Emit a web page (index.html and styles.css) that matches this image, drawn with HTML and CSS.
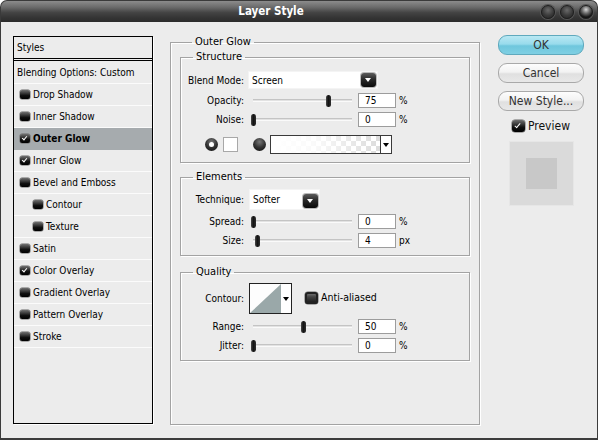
FILE: index.html
```html
<!DOCTYPE html>
<html>
<head>
<meta charset="utf-8">
<title>Layer Style</title>
<link rel="stylesheet" href="styles.css">
</head>
<body>
<div class="window">
  <div class="titlebar">
    <div class="title">Layer Style</div>
    <div class="winbtns"><span class="wb"></span><span class="wb"></span><span class="wb wb-active"></span></div>
  </div>
  <div class="body">
    <div class="styles-list">
      <div class="list-head">Styles</div>
      <div class="list-row blend">Blending Options: Custom</div>
      <div class="list-row"><span class="ico"></span>Drop Shadow</div>
      <div class="list-row"><span class="ico"></span>Inner Shadow</div>
      <div class="list-row selected"><span class="ico on"></span>Outer Glow</div>
      <div class="list-row"><span class="ico on"></span>Inner Glow</div>
      <div class="list-row"><span class="ico"></span>Bevel and Emboss</div>
      <div class="list-row sub"><span class="ico"></span>Contour</div>
      <div class="list-row sub"><span class="ico"></span>Texture</div>
      <div class="list-row"><span class="ico"></span>Satin</div>
      <div class="list-row"><span class="ico on"></span>Color Overlay</div>
      <div class="list-row"><span class="ico"></span>Gradient Overlay</div>
      <div class="list-row"><span class="ico"></span>Pattern Overlay</div>
      <div class="list-row"><span class="ico"></span>Stroke</div>
    </div>

    <fieldset class="group outer">
      <legend>Outer Glow</legend>

      <fieldset class="group sub-group structure">
        <legend>Structure</legend>
        <div class="frow r-blend">
          <span class="lbl">Blend Mode:</span>
          <div class="select sel-blend"><span class="sel-text">Screen</span><span class="dd"></span></div>
        </div>
        <div class="frow r-slide">
          <span class="lbl">Opacity:</span>
          <div class="slider"><div class="track"><span class="thumb" style="left:76%"></span></div></div>
          <div class="num">75</div><span class="unit">%</span>
        </div>
        <div class="frow r-slide">
          <span class="lbl">Noise:</span>
          <div class="slider"><div class="track"><span class="thumb" style="left:0%"></span></div></div>
          <div class="num">0</div><span class="unit">%</span>
        </div>
        <div class="frow r-color">
          <span class="radio on"></span>
          <span class="swatch"></span>
          <span class="radio"></span>
          <div class="gradbox"><span class="grad"></span><span class="arrow-cell"><span class="tri"></span></span></div>
        </div>
      </fieldset>

      <fieldset class="group sub-group elements">
        <legend>Elements</legend>
        <div class="frow r-tech">
          <span class="lbl">Technique:</span>
          <div class="select sel-tech"><span class="sel-text">Softer</span><span class="dd"></span></div>
        </div>
        <div class="frow r-slide r-spread">
          <span class="lbl">Spread:</span>
          <div class="slider"><div class="track"><span class="thumb" style="left:0%"></span></div></div>
          <div class="num">0</div><span class="unit">%</span>
        </div>
        <div class="frow r-slide">
          <span class="lbl">Size:</span>
          <div class="slider"><div class="track"><span class="thumb" style="left:4%"></span></div></div>
          <div class="num">4</div><span class="unit">px</span>
        </div>
      </fieldset>

      <fieldset class="group sub-group quality">
        <legend>Quality</legend>
        <div class="frow r-contour">
          <span class="lbl">Contour:</span>
          <div class="contour">
            <svg class="curve" width="31" height="29" viewBox="0 0 31 29"><rect width="31" height="29" fill="#fdfdfd"/><polygon points="0,29 31,0 31,29" fill="#9aa8a9"/></svg>
            <span class="arrow-cell"><span class="tri"></span></span>
          </div>
          <span class="cbox"></span><span class="cb-text">Anti-aliased</span>
        </div>
        <div class="frow r-slide r-range">
          <span class="lbl">Range:</span>
          <div class="slider"><div class="track"><span class="thumb" style="left:50%"></span></div></div>
          <div class="num">50</div><span class="unit">%</span>
        </div>
        <div class="frow r-slide">
          <span class="lbl">Jitter:</span>
          <div class="slider"><div class="track"><span class="thumb" style="left:0%"></span></div></div>
          <div class="num">0</div><span class="unit">%</span>
        </div>
      </fieldset>
    </fieldset>

    <div class="actions">
      <div class="btn btn-ok">OK</div>
      <div class="btn">Cancel</div>
      <div class="btn">New Style...</div>
      <div class="preview-row"><span class="ico big on"></span><span>Preview</span></div>
      <div class="preview"><div class="preview-inner"></div></div>
    </div>
  </div>
</div>
</body>
</html>
```

FILE: styles.css
```css
* { box-sizing: border-box; }
html, body { margin: 0; padding: 0; }
body {
  width: 598px;
  height: 440px;
  overflow: hidden;
  background: #ffffff;
  font-family: "DejaVu Sans Condensed", "DejaVu Sans", sans-serif;
  font-size: 10px;
  color: #000;
}
.window {
  width: 598px;
  height: 440px;
  display: flex;
  flex-direction: column;
}
.titlebar {
  height: 22px;
  flex: none;
  display: flex;
  align-items: center;
  border-radius: 7px 7px 0 0;
  background: linear-gradient(#8c8c8c 0%, #6a6a6a 30%, #444 55%, #343434 80%, #2c2c2c 100%);
  border: 1px solid #3a3a3a;
  border-bottom: none;
}
.title {
  flex: 1;
  text-align: center;
  color: #fff;
  font-weight: bold;
  font-size: 11.5px;
  padding-bottom: 1px;
}
.winbtns {
  display: flex;
  gap: 5px;
  padding-right: 4px;
}
.wb {
  width: 14px;
  height: 14px;
  border-radius: 50%;
  background: radial-gradient(circle at 50% 35%, #6a6a6a 0%, #3a3a3a 55%, #242424 100%);
  border: 1px solid #1e1e1e;
  box-shadow: 0 0 0 1px #555;
}
.wb-active {
  background: radial-gradient(circle at 50% 30%, #d8d8d8 0%, #707070 35%, #1a1a1a 70%, #000 100%);
}
.body {
  flex: 1;
  display: flex;
  align-items: flex-start;
  background: #ececec;
  border: 1px solid #3c3c3c;
  border-top: none;
  border-bottom: 2px solid #3c3c3c;
  padding: 12px 0 0 12px;
}

/* styles list */
.styles-list {
  width: 140px;
  height: 388px;
  margin-top: 2px;
  border: 1px solid #000;
  box-shadow: 1px 1px 0 #ffffff;
  flex: none;
}
.list-head {
  height: 22px;
  line-height: 21px;
  padding-left: 3px;
  border-bottom: 1px solid #000;
  margin-bottom: 1px;
}
.list-row {
  height: 22px;
  display: flex;
  align-items: center;
  padding-left: 6px;
  border-bottom: 1px solid #fbfbfb;
  white-space: nowrap;
}
.list-row.blend {
  height: 24px;
  padding-left: 3px;
  border-top: 1px solid #000;
}
.list-row.sub { padding-left: 19px; }
.list-row.selected {
  background: #a6abae;
  font-weight: bold;
  border-bottom-color: #a6abae;
}
.ico {
  position: relative;
  display: inline-block;
  width: 10px;
  height: 9px;
  margin-right: 3px;
  border-radius: 2px;
  background: linear-gradient(#707070 0%, #3a3a3a 35%, #111 60%, #000 100%);
  box-shadow: 0 0 0 0.5px #666;
  flex: none;
}
.ico.on::after {
  content: "";
  position: absolute;
  left: 3px;
  top: 1px;
  width: 2px;
  height: 4px;
  border: solid #fff;
  border-width: 0 1.5px 1.5px 0;
  transform: rotate(40deg);
}

/* fieldsets */
.group {
  margin: 0;
  padding: 0;
  border: 1px solid #a3a3a3;
  box-shadow: 1px 1px 0 #fff, inset 1px 1px 0 #fff;
  min-width: 0;
}
.group > legend {
  margin-left: 12px;
  padding: 0 3px;
  font-size: 11px;
  line-height: 14px;
}
.outer {
  width: 310px;
  height: 390px;
  margin-left: 17px;
  margin-top: 1px;
  padding: 0 9px;
  flex: none;
}
.sub-group { width: 290px; }
.structure { margin-top: 1px; padding: 6px 0 7px 0; }
.elements { margin-top: 7px; padding: 4px 0 5px 0; }
.quality { margin-top: 9px; padding: 3px 0 5px 0; }

.frow {
  display: flex;
  align-items: center;
  white-space: nowrap;
}
.lbl {
  width: 63px;
  text-align: right;
  flex: none;
}
.r-blend { height: 20px; }
.r-slide { height: 19px; }
.r-blend + .r-slide { height: 20px; padding-top: 1px; }
.r-color { height: 21px; margin-top: 5px; padding-left: 24px; }
.r-tech { height: 22px; }
.r-spread { height: 21px; padding-top: 1px; }
.r-contour { height: 33px; }
.r-range { height: 21px; padding-top: 1px; }

.select {
  margin-left: 4px;
  background: #fff;
  display: flex;
  align-items: center;
  justify-content: space-between;
  padding: 0 2px 0 4px;
  box-shadow: inset 0 0 0 1px #f4f4f4;
}
.sel-blend { width: 130px; height: 18px; }
.sel-tech { width: 71px; height: 21px; margin-left: 5px; }
.sel-tech .dd { margin-top: 3px; }
.sel-text { font-size: 10px; padding-top: 1px; }
.dd {
  position: relative;
  width: 15px;
  height: 14px;
  border-radius: 3px;
  background: linear-gradient(#5c5c5c 0%, #2a2a2a 45%, #0a0a0a 100%);
  box-shadow: 0 0 0 1px #bbb;
}
.dd::after {
  content: "";
  position: absolute;
  left: 4px;
  top: 5px;
  border-left: 3.5px solid transparent;
  border-right: 3.5px solid transparent;
  border-top: 4px solid #fff;
}

.slider {
  margin-left: 6px;
  padding: 0 3px;
  width: 105px;
  flex: none;
}
.track {
  position: relative;
  height: 3px;
  background: #e2e2e2;
  border-top: 1px solid #c4c4c4;
  border-bottom: 1px solid #fafafa;
}
.thumb {
  position: absolute;
  top: -5px;
  width: 5px;
  height: 12px;
  margin-left: -2px;
  border-radius: 3px;
  background: linear-gradient(90deg, #4a4a4a 0%, #111 45%, #2e2e2e 100%);
}
.num {
  width: 38px;
  height: 15px;
  margin-left: 3px;
  background: #fff;
  border: 1px solid #9c9c9c;
  padding-left: 6px;
  font-size: 10px;
  line-height: 13px;
  flex: none;
}
.unit {
  margin-left: 3px;
  font-size: 10px;
}

.radio {
  width: 13px;
  height: 13px;
  border-radius: 50%;
  background: radial-gradient(circle at 50% 30%, #777 0%, #333 50%, #0c0c0c 100%);
  flex: none;
  position: relative;
}
.radio.on::after {
  content: "";
  position: absolute;
  left: 4px;
  top: 4px;
  width: 5px;
  height: 5px;
  border-radius: 50%;
  background: #fff;
}
.swatch {
  width: 15px;
  height: 15px;
  margin-left: 5px;
  margin-right: 15px;
  background: #fff;
  border: 1px solid #a8a8a8;
  flex: none;
}
.gradbox {
  margin-left: 4px;
  width: 122px;
  height: 19px;
  border: 1px solid #3a3a3a;
  display: flex;
  flex: none;
}
.grad {
  flex: 1;
  background-color: #fff;
  background-image:
    linear-gradient(90deg, #fff 0%, rgba(255,255,255,0.85) 40%, rgba(255,255,255,0) 100%),
    linear-gradient(45deg, #dcdcdc 25%, transparent 25%, transparent 75%, #dcdcdc 75%),
    linear-gradient(45deg, #dcdcdc 25%, transparent 25%, transparent 75%, #dcdcdc 75%);
  background-size: 100% 100%, 10px 10px, 10px 10px;
  background-position: 0 0, 0 0, 5px 5px;
}
.arrow-cell {
  width: 11px;
  background: #fff;
  border-left: 1px solid #3a3a3a;
  display: flex;
  align-items: center;
  justify-content: center;
  flex: none;
}
.tri {
  border-left: 3px solid transparent;
  border-right: 3px solid transparent;
  border-top: 4px solid #000;
}

.contour {
  margin-left: 5px;
  width: 43px;
  height: 31px;
  border: 1px solid #222;
  display: flex;
  flex: none;
  background: #fff;
}
.curve { display: block; flex: none; }
.contour .arrow-cell { border-left: none; width: 10px; }
.cbox {
  margin-left: 13px;
  width: 13px;
  height: 12px;
  border-radius: 3px;
  background: linear-gradient(#888 0%, #444 40%, #111 100%);
  box-shadow: inset 0 0 0 2px #222, 0 0 0 0.5px #666;
  flex: none;
  align-self: flex-start;
  margin-top: 10px;
}
.cb-text {
  margin-left: 3px;
  align-self: flex-start;
  margin-top: 9px;
  font-size: 10.5px;
}

/* right column */
.actions {
  width: 86px;
  margin-left: 18px;
  margin-top: 1px;
  display: flex;
  flex-direction: column;
  align-items: center;
  flex: none;
}
.btn {
  width: 86px;
  height: 20px;
  margin-bottom: 8px;
  border-radius: 9px;
  border: 1px solid #a9a9a9;
  background: linear-gradient(#fdfdfd 0%, #f2f2f2 45%, #e0e0e0 55%, #e8e8e8 100%);
  color: #333;
  font-size: 12px;
  text-align: center;
  line-height: 18px;
}
.btn-ok {
  border-color: #5fa9bd;
  background: linear-gradient(#b9e8f3 0%, #98dbec 45%, #6fc7dd 55%, #7fcfe3 100%);
}
.preview-row {
  display: flex;
  align-items: center;
  height: 12px;
  margin-top: 1px;
  font-size: 12px;
  color: #111;
}
.ico.big {
  width: 13px;
  height: 12px;
  border-radius: 3px;
}
.ico.big.on::after { left: 4px; top: 2px; height: 5px; }
.preview {
  margin-top: 9px;
  width: 65px;
  height: 65px;
  background: #dadada;
  border: 1px solid #e6e6e6;
  display: flex;
  align-items: center;
  justify-content: center;
}
.preview-inner {
  width: 31px;
  height: 31px;
  background: #c8c8c8;
}
```
